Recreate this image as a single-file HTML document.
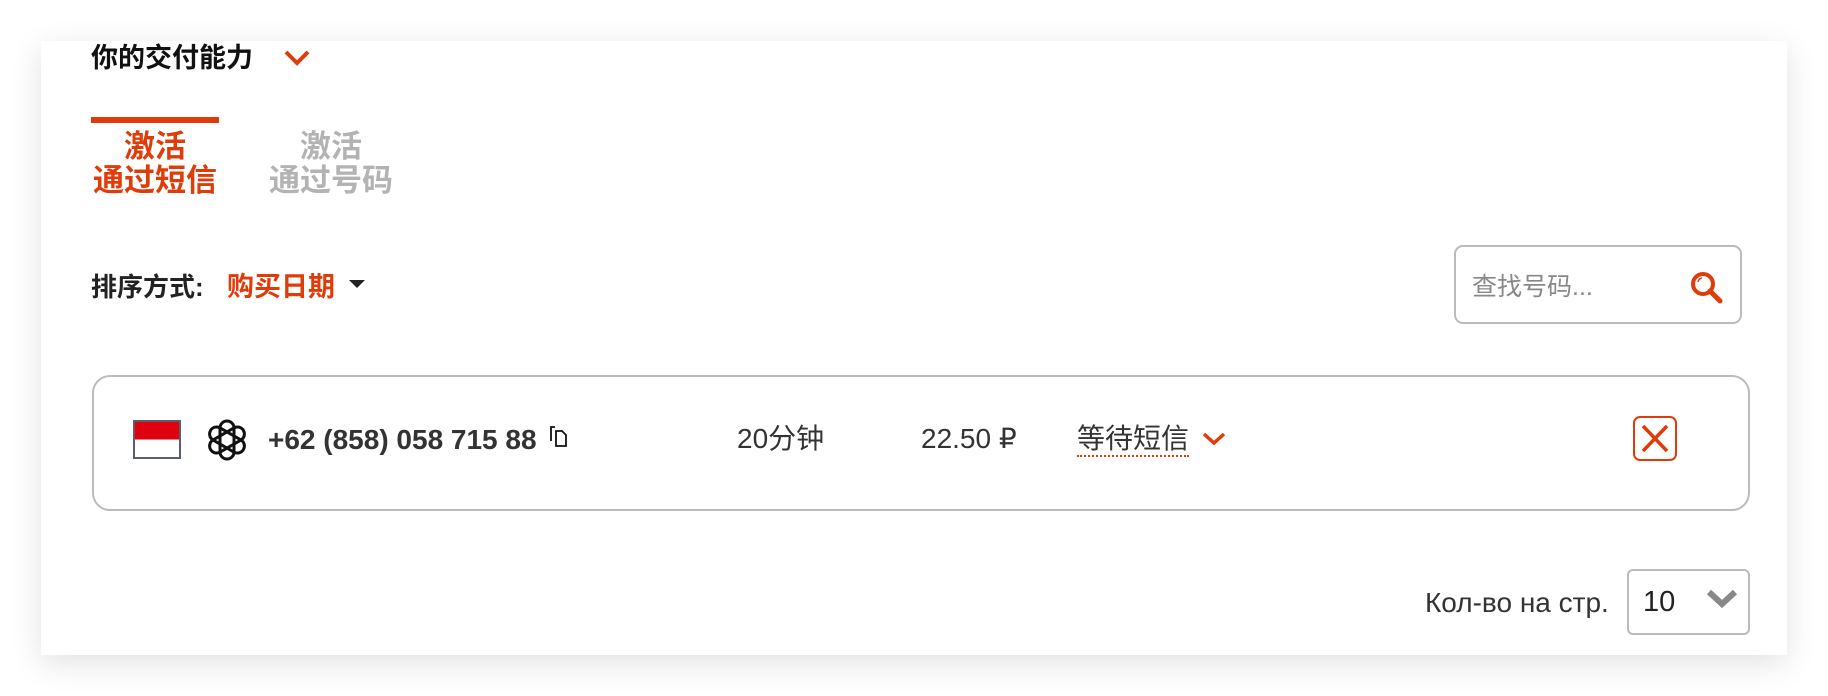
<!DOCTYPE html>
<html><head><meta charset="utf-8"><style>
*{margin:0;padding:0;box-sizing:border-box}
body{width:1828px;height:696px;background:#fff;position:relative;overflow:hidden;font-family:"Liberation Sans","Noto Sans CJK SC",sans-serif;color:#333}
.card{position:absolute;left:41px;top:41px;width:1746px;height:614px;background:#fff;box-shadow:0 8px 30px rgba(0,0,0,.12)}
.a{position:absolute;white-space:nowrap}
.or{color:#e03c0a}
</style></head><body>
<div class="card"></div>
<div class="a" style="left:91px;top:42px;font-size:27px;font-weight:bold;color:#111;line-height:32px">你的交付能力</div>
<svg class="a" style="left:283px;top:48px" width="28" height="20"><path d="M3 4 L14 15 L25 4" fill="none" stroke="#e03c0a" stroke-width="4"/></svg>
<div class="a" style="left:91px;top:117px;width:128px;height:6px;background:#e03c0a"></div>
<div class="a or" style="left:91px;top:130px;width:128px;text-align:center;font-size:31px;font-weight:bold;line-height:34px">激活<br>通过短信</div>
<div class="a" style="left:267px;top:130px;width:128px;text-align:center;font-size:31px;font-weight:bold;line-height:34px;color:#b3b3b3">激活<br>通过号码</div>
<div class="a" style="left:91px;top:271px;font-size:26px;font-weight:bold;line-height:32px;color:#222">排序方式:</div>
<div class="a or" style="left:227px;top:271px;font-size:27px;font-weight:bold;line-height:32px">购买日期</div>
<div class="a" style="left:349px;top:280px;width:0;height:0;border-left:8px solid transparent;border-right:8px solid transparent;border-top:8px solid #222"></div>
<div class="a" style="left:1454px;top:245px;width:288px;height:79px;border:2px solid #bbb;border-radius:9px"></div>
<div class="a" style="left:1472px;top:272px;font-size:25px;line-height:30px;color:#888">查找号码...</div>
<svg class="a" style="left:1689px;top:270px" width="36" height="36"><circle cx="14" cy="14" r="10" fill="none" stroke="#e03c0a" stroke-width="4"/><path d="M21 21 L31 31" stroke="#e03c0a" stroke-width="5" stroke-linecap="round"/><path d="M9 12 a5 5 0 0 1 4 -4" fill="none" stroke="#e03c0a" stroke-width="1.5"/></svg>
<div class="a" style="left:92px;top:375px;width:1658px;height:136px;border:2px solid #bbb;border-radius:18px"></div>
<div class="a" style="left:133px;top:420px;width:48px;height:39px;border:2px solid #5a6068;background:linear-gradient(#e0000f 50%,#fff 50%)"></div>
<svg class="a" style="left:204px;top:417px" width="46" height="46" viewBox="0 0 46 46"><g fill="none" stroke="#111" stroke-width="3"><rect x="16" y="4" width="14" height="38" rx="7"/><rect x="16" y="4" width="14" height="38" rx="7" transform="rotate(60 23 23)"/><rect x="16" y="4" width="14" height="38" rx="7" transform="rotate(-60 23 23)"/></g></svg>
<div class="a" style="left:268px;top:424px;font-size:28px;font-weight:bold;line-height:32px;color:#333">+62 (858) 058 715 88</div>
<svg class="a" style="left:550px;top:426px" width="18" height="22"><path d="M5 1 H1 V15" fill="none" stroke="#111" stroke-width="1.8"/><path d="M6 5 H12 L16 9 V20 H6 Z" fill="none" stroke="#111" stroke-width="1.8"/></svg>
<div class="a" style="left:737px;top:423px;font-size:28px;line-height:32px;color:#333">20分钟</div>
<div class="a" style="left:921px;top:423px;font-size:28px;line-height:32px;color:#333">22.50 ₽</div>
<div class="a" style="left:1077px;top:423px;font-size:28px;line-height:32px;color:#333;border-bottom:2px dotted #e03c0a">等待短信</div>
<svg class="a" style="left:1201px;top:431px" width="26" height="16"><path d="M3 3 L13 12 L23 3" fill="none" stroke="#e03c0a" stroke-width="3.5"/></svg>
<div class="a" style="left:1633px;top:416px;width:44px;height:45px;border:2px solid #e03c0a;border-radius:7px"></div>
<svg class="a" style="left:1633px;top:416px" width="44" height="45"><path d="M10 10 L34 35 M34 10 L10 35" stroke="#e03c0a" stroke-width="3.5"/></svg>
<div class="a" style="left:1425px;top:587px;font-size:28px;line-height:32px;color:#333">Кол-во на стр.</div>
<div class="a" style="left:1627px;top:569px;width:123px;height:66px;border:2px solid #bbb;border-radius:6px"></div>
<div class="a" style="left:1643px;top:586px;font-size:29px;line-height:32px;color:#222">10</div>
<svg class="a" style="left:1706px;top:588px" width="32" height="22"><path d="M3 4 L16 16 L29 4" fill="none" stroke="#888" stroke-width="6"/></svg>
</body></html>
